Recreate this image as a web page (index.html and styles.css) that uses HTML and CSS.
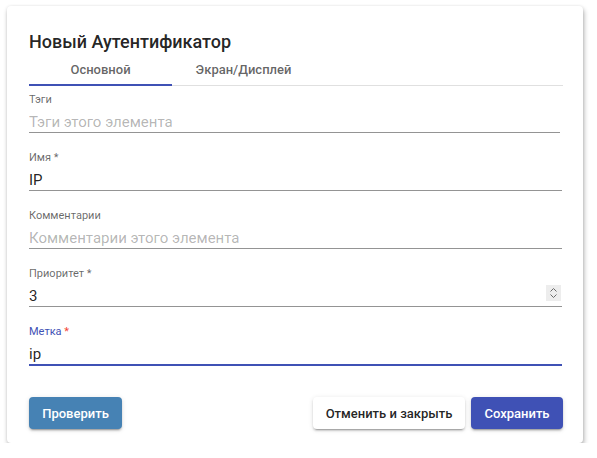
FILE: index.html
```html
<!DOCTYPE html>
<html lang="ru">
<head>
<meta charset="utf-8">
<link rel="stylesheet" href="styles.css">
</head>
<body>
<div class="card">
  <h2 class="title">Новый Аутентификатор</h2>
  <div class="tabs">
    <div class="tab active">Основной</div>
    <div class="tab">Экран/Дисплей</div>
  </div>
  <div class="fields">
    <div class="field short">
      <label class="label">Тэги</label>
      <input class="input" placeholder="Тэги этого элемента">
    </div>
    <div class="field">
      <label class="label">Имя *</label>
      <input class="input" value="IP">
    </div>
    <div class="field">
      <label class="label">Комментарии</label>
      <input class="input" placeholder="Комментарии этого элемента">
    </div>
    <div class="field">
      <label class="label">Приоритет *</label>
      <div class="numwrap">
        <input class="input" value="3">
        <span class="spinner">
          <svg width="9" height="12" viewBox="0 0 9 12"><path d="M1.5 4.5 L4.5 1.5 L7.5 4.5 M1.5 7.5 L4.5 10.5 L7.5 7.5" fill="none" stroke="#6b6b6b" stroke-width="1"/></svg>
        </span>
      </div>
    </div>
    <div class="field focused">
      <label class="label">Метка <span class="req">*</span></label>
      <input class="input" value="ip">
    </div>
  </div>
  <div class="actions">
    <button class="btn btn-test">Проверить</button>
    <div class="spacer"></div>
    <button class="btn btn-cancel">Отменить и закрыть</button>
    <button class="btn btn-save">Сохранить</button>
  </div>
</div>
</body>
</html>
```

FILE: styles.css
```css
html, body {
  margin: 0;
  padding: 0;
  background: #ffffff;
  font-family: Roboto, "Liberation Sans", sans-serif;
}
body {
  padding: 6px 14px 0 7px;
}
.card {
  width: 576px;
  height: 437px;
  box-sizing: border-box;
  padding: 24px 20px 0 22px;
  background: #fff;
  border-radius: 4px;
  box-shadow: 1px 3px 5px rgba(0,0,0,.3), 0 0 3px rgba(0,0,0,.08);
  display: flex;
  flex-direction: column;
}
.title {
  margin: 0 0 1px 0;
  font-size: 18px;
  line-height: 24px;
  font-weight: 500;
  color: rgba(0,0,0,.87);
}
.tabs {
  display: flex;
  border-bottom: 1px solid #e0e0e0;
  height: 30px;
}
.tab {
  width: 143px;
  box-sizing: border-box;
  text-align: center;
  font-size: 13px;
  font-weight: 500;
  line-height: 30px;
  color: rgba(0,0,0,.62);
}
.tab.active {
  border-bottom: 2px solid #3f51b5;
  line-height: 30px;
  height: 31px;
}
.fields {
  padding-top: 7px;
  display: flex;
  flex-direction: column;
  gap: 18px;
}
.field {
  display: flex;
  flex-direction: column;
  width: 533px;
}
.field.short {
  width: 531px;
}
.label {
  font-size: 11px;
  line-height: 14px;
  color: rgba(0,0,0,.6);
  margin-bottom: 5px;
}
.input {
  border: none;
  border-bottom: 1px solid #949494;
  outline: none;
  padding: 0;
  margin: 0;
  font-family: Roboto, "Liberation Sans", sans-serif;
  font-size: 15px;
  line-height: 20px;
  height: 21px;
  box-sizing: border-box;
  color: rgba(0,0,0,.87);
  background: transparent;
  width: 100%;
}
.input::placeholder {
  color: rgba(0,0,0,.3);
}
.numwrap {
  position: relative;
}
.spinner {
  position: absolute;
  right: 1px;
  top: -1px;
  width: 15px;
  height: 16px;
  background: #ededed;
  display: flex;
  align-items: center;
  justify-content: center;
}
.focused .label {
  color: #3f51b5;
}
.req {
  color: #f44336;
}
.focused .input {
  border-bottom: 2px solid #3f51b5;
  height: 22px;
}
.actions {
  margin-top: 31px;
  display: flex;
  align-items: center;
  gap: 6px;
  width: 534px;
}
.spacer {
  flex: 1;
}
.btn {
  height: 32px;
  border: none;
  border-radius: 4px;
  font-family: Roboto, "Liberation Sans", sans-serif;
  font-size: 13px;
  font-weight: 500;
  padding: 0;
  box-shadow: 0 3px 1px -2px rgba(0,0,0,.2), 0 2px 2px 0 rgba(0,0,0,.14), 0 1px 5px 0 rgba(0,0,0,.12);
}
.btn-test {
  width: 93px;
  background: #4682b4;
  color: #fff;
}
.btn-cancel {
  width: 152px;
  background: #fff;
  color: rgba(0,0,0,.87);
}
.btn-save {
  width: 92px;
  background: #3f51b5;
  color: #fff;
}
```
